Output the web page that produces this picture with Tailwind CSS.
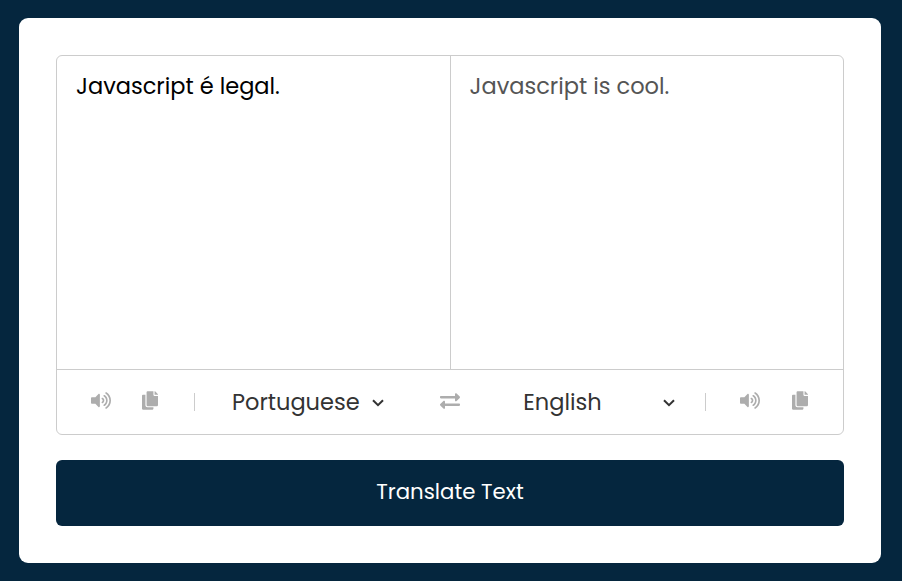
<!DOCTYPE html>
<html lang="en">
<head>
<meta charset="utf-8">
<title>Translator</title>
<script src="https://cdn.jsdelivr.net/npm/@tailwindcss/browser@4"></script>
</head>
<body class="h-[581px] overflow-hidden bg-[#05263e] pt-[18px] pl-[19px] font-[Poppins,Inter,sans-serif]">
<svg class="hidden">
  <symbol id="volume" viewBox="0 0 576 512"><path d="M215.03 71.05L126.06 160H24c-13.26 0-24 10.74-24 24v144c0 13.25 10.74 24 24 24h102.06l88.97 88.95c15.03 15.03 40.97 4.47 40.97-16.97V88.02c0-21.46-25.96-31.98-40.97-16.97zm233.32-51.1c-11.17-7.33-26.18-4.24-33.51 6.95-7.34 11.17-4.22 26.18 6.95 33.51 66.27 43.49 105.82 116.6 105.82 195.58 0 78.98-39.55 152.09-105.82 195.58-11.17 7.32-14.29 22.34-6.95 33.5 7.04 10.71 21.93 14.56 33.51 6.95C528.27 439.58 576 351.33 576 256S528.27 72.43 448.35 19.95zM480 256c0-63.53-32.06-121.94-85.77-156.24-11.19-7.14-26.03-3.82-33.12 7.46s-3.78 26.21 7.41 33.36C408.27 165.97 432 209.11 432 256s-23.73 90.02-63.48 115.42c-11.19 7.14-14.5 22.07-7.41 33.36 6.51 10.36 21.12 15.14 33.12 7.46C447.94 377.94 480 319.53 480 256zm-141.77-76.87c-11.58-6.33-26.19-2.16-32.61 9.45-6.39 11.61-2.16 26.2 9.45 32.61C327.98 228.28 336 241.63 336 256c0 14.38-8.02 27.72-20.92 34.81-11.61 6.41-15.84 21-9.45 32.61 6.43 11.66 21.05 15.8 32.61 9.45 28.23-15.55 45.77-45 45.77-76.88s-17.54-61.32-45.78-76.86z"/></symbol>
  <symbol id="copy" viewBox="0 0 448 512"><path d="M320 448v40c0 13.255-10.745 24-24 24H24c-13.255 0-24-10.745-24-24V120c0-13.255 10.745-24 24-24h72v296c0 30.879 25.121 56 56 56h168zm0-344V0H152c-13.255 0-24 10.745-24 24v368c0 13.255 10.745 24 24 24h272c13.255 0 24-10.745 24-24V128H344c-13.2 0-24-10.8-24-24zm120.971-31.029L375.029 7.029A24 24 0 0 0 358.059 0H352v96h96v-6.059a24 24 0 0 0-7.029-16.97z"/></symbol>
</svg>
<main class="h-[545px] w-[862px] rounded-[9px] bg-white p-[37px]">
  <section class="flex h-[380px] flex-col rounded-[6px] border border-[#ccc]">
    <div class="flex h-[314px] border-b border-[#ccc] text-[22.5px] leading-[34px]">
      <div class="w-[394px] border-r border-[#ccc] pt-[13px] pl-[19px] text-black">Javascript é legal.</div>
      <div class="pt-[13px] pl-[18.5px] text-[#555]">Javascript is cool.</div>
    </div>
    <div class="flex flex-1 items-center text-[22.5px] leading-[34px] text-[#333]">
      <div class="flex h-[18px] w-[138px] items-center border-r border-[#ccc] pl-[34px] text-[#adadad]">
        <svg class="mb-[3px] h-[19px] w-[20px] shrink-0 fill-current"><use href="#volume"/></svg>
        <svg class="mb-[3px] ml-[31px] h-[19px] w-[16px] shrink-0 fill-current"><use href="#copy"/></svg>
      </div>
      <div class="flex w-[245px] items-center pl-[37px]">
        <span class="w-[138px] -mt-px">Portuguese</span>
        <svg class="mt-[2px] ml-[2px] h-[8px] w-[12px]" viewBox="0 0 12 8" fill="none" stroke="#333" stroke-width="2"><path d="M1 1.2 6 6.2 11 1.2"/></svg>
      </div>
      <svg class="mb-[2px] h-5 w-5 fill-[#adadad]" viewBox="0 0 512 512"><path d="M0 168v-16c0-13.255 10.745-24 24-24h360V80c0-21.367 25.899-32.042 40.971-16.971l80 80c9.372 9.373 9.372 24.569 0 33.941l-80 80C409.956 271.982 384 261.456 384 240v-48H24c-13.255 0-24-10.745-24-24zm488 152H128v-48c0-21.314-25.862-32.08-40.971-16.971l-80 80c-9.372 9.373-9.372 24.569 0 33.941l80 80C102.057 463.997 128 453.437 128 432v-48h360c13.255 0 24-10.745 24-24v-16c0-13.255-10.745-24-24-24z"/></svg>
      <div class="flex w-[245px] items-center pl-[63.3px]">
        <span class="w-[138px] -mt-px">English</span>
        <svg class="mt-[2px] ml-[2px] h-[8px] w-[12px]" viewBox="0 0 12 8" fill="none" stroke="#333" stroke-width="2"><path d="M1 1.2 6 6.2 11 1.2"/></svg>
      </div>
      <div class="flex h-[18px] items-center border-l border-[#ccc] pl-[34px] text-[#adadad]">
        <svg class="mb-[3px] h-[19px] w-[20px] shrink-0 fill-current"><use href="#volume"/></svg>
        <svg class="mb-[3px] ml-[32px] h-[19px] w-[16px] shrink-0 fill-current"><use href="#copy"/></svg>
      </div>
    </div>
  </section>
  <button class="mt-[25px] block h-[66px] w-full rounded-[6px] bg-[#05263e] pb-[2px] text-[21.3px] text-white">Translate Text</button>
</main>
</body>
</html>
